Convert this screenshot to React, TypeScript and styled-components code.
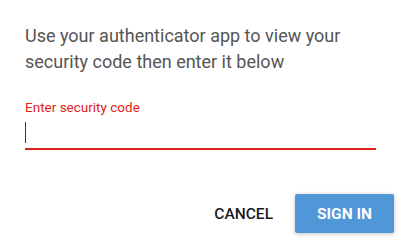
import styled, { createGlobalStyle } from "styled-components";

const GlobalStyle = createGlobalStyle`
    html, body {
        margin: 0;
        padding: 0;
        background: #ffffff;
    }
    body {
        font-family: Roboto, "Liberation Sans", sans-serif;
    }
`;

const Dialog = styled.div`
    width: 400px;
    height: 242px;
    box-sizing: border-box;
    padding: 23px 6px 8px 25px;
    display: flex;
    flex-direction: column;
`;

const Message = styled.p`
    margin: 0;
    font-size: 18px;
    line-height: 26px;
    color: #555555;
    width: 350px;
`;

const Field = styled.div`
    display: flex;
    flex-direction: column;
    margin-top: 24px;
    width: 351px;
`;

const FieldLabel = styled.span`
    font-size: 13.5px;
    line-height: 16px;
    color: #e0241b;
`;

const InputBox = styled.div`
    margin-top: 6px;
    height: 27px;
    border-bottom: 2px solid #d9261c;
`;

const Caret = styled.span`
    display: block;
    width: 1px;
    height: 21px;
    background: #333333;
    margin-top: 1px;
`;

const Actions = styled.div`
    display: flex;
    justify-content: flex-end;
    align-items: center;
    gap: 18px;
    margin-top: auto;
    padding-bottom: 1px;
`;

const Button = styled.button<{ $primary?: boolean }>`
    font-family: Roboto, "Liberation Sans", sans-serif;
    font-size: 15.5px;
    font-weight: ${p => (p.$primary ? 700 : 500)};
    text-transform: uppercase;
    border: none;
    border-radius: 2px;
    height: 39px;
    padding: 0 ${p => (p.$primary ? "22px" : "4px")};
    min-width: ${p => (p.$primary ? "99px" : "0")};
    color: ${p => (p.$primary ? "#ffffff" : "#1a1a1a")};
    background: ${p => (p.$primary ? "#4f97d6" : "transparent")};
    box-shadow: ${p => (p.$primary ? "0 1px 4px rgba(0,0,0,0.25)" : "none")};
    cursor: pointer;
`;

export default function App() {
    return (
        <>
            <GlobalStyle />
            <Dialog>
                <Message>
                    Use your authenticator app to view your security code then enter it below
                </Message>
                <Field>
                    <FieldLabel>Enter security code</FieldLabel>
                    <InputBox>
                        <Caret />
                    </InputBox>
                </Field>
                <Actions>
                    <Button>Cancel</Button>
                    <Button $primary>Sign in</Button>
                </Actions>
            </Dialog>
        </>
    );
}
